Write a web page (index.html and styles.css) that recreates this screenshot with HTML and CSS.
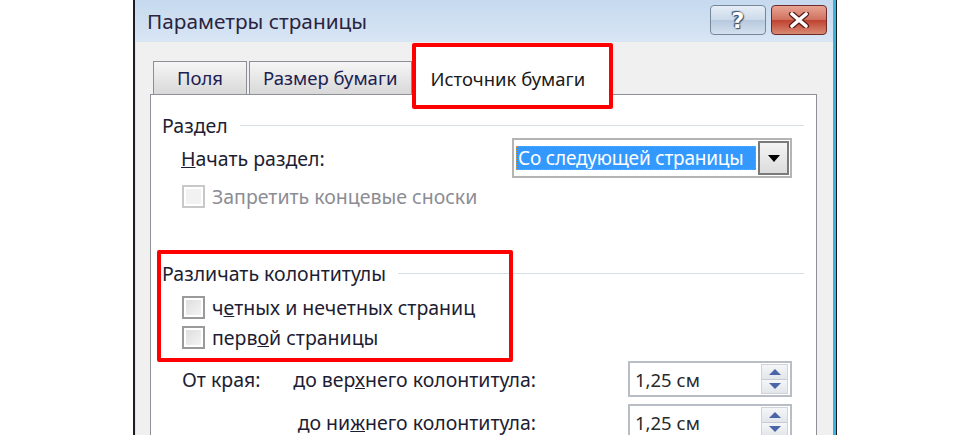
FILE: index.html
```html
<!DOCTYPE html>
<html lang="ru">
<head>
  <meta charset="UTF-8">
  <title>Параметры страницы</title>
  <link rel="stylesheet" href="styles.css">
</head>
<body>
  <div class="window">
    <div class="titlebar">
      <span class="title">Параметры страницы</span>
      <div class="caption-btns">
        <button class="cap-btn help">?</button>
        <button class="cap-btn close">
          <svg width="22" height="16" viewBox="0 0 22 16">
            <path d="M4 2 L18 14 M18 2 L4 14" stroke="#5a1a1a" stroke-width="6" stroke-linecap="round"/>
            <path d="M4 2 L18 14 M18 2 L4 14" stroke="#fff" stroke-width="3.6" stroke-linecap="round"/>
          </svg>
        </button>
      </div>
    </div>

    <div class="client">
      <div class="tabs">
        <div class="tab">Поля</div>
        <div class="tab">Размер бумаги</div>
        <div class="tab active">Источник бумаги</div>
      </div>

      <div class="panel">
        <div class="group-head"><span>Раздел</span><i></i></div>

        <div class="row start-row">
          <span class="label"><u>Н</u>ачать раздел:</span>
          <div class="combo">
            <div class="combo-value"><span>Со следующей страницы</span></div>
            <div class="combo-btn"><b></b></div>
          </div>
        </div>

        <label class="check disabled"><span class="box"></span>Запретить концевые сноски</label>

        <div class="group-head second"><span>Различать колонтитулы</span><i></i></div>
        <label class="check first"><span class="box"></span>ч<u>е</u>тных и нечетных страниц</label>
        <label class="check"><span class="box"></span>перв<u>о</u>й страницы</label>

        <div class="margins">
          <span class="label">От края:</span>
          <span class="label right">до вер<u>х</u>него колонтитула:</span>
          <div class="spin">
            <span>1,25 см</span>
            <div class="spin-btns"><b class="up"></b><b class="down"></b></div>
          </div>
          <span></span>
          <span class="label right">до ни<u>ж</u>него колонтитула:</span>
          <div class="spin">
            <span>1,25 см</span>
            <div class="spin-btns"><b class="up"></b><b class="down"></b></div>
          </div>
        </div>
      </div>
    </div>

    <!-- пометки поверх диалога -->
    <div class="mark mark-tab"></div>
    <div class="mark mark-group"></div>
  </div>
</body>
</html>
```

FILE: styles.css
```css
* {
  margin: 0;
  padding: 0;
  box-sizing: border-box;
}

body {
  background: #fff;
  height: 100vh;
  overflow: hidden;
  font-family: "Noto Sans", "Open Sans", sans-serif;
  color: #1d1d33;
}

.window {
  position: relative;
  margin-left: 133px;
  width: 704px;
  height: 100vh;
  overflow: hidden;
  border-left: 2px solid #1b1e24;
  border-right: 1px solid #1b1e24;
  background: linear-gradient(#c6d9ee, #d7e5f4 40px);
  box-shadow: inset -3px 0 0 #38b5dc;
  display: flex;
  flex-direction: column;
}

.titlebar {
  height: 42px;
  flex: none;
  display: flex;
  align-items: flex-start;
  justify-content: space-between;
  padding: 5px 9px 0 12px;
}

.title {
  font-size: 20.8px;
  line-height: 32px;
  color: #2a2440;
}

.caption-btns {
  display: flex;
  gap: 5px;
}

.cap-btn {
  width: 56px;
  height: 30px;
  border-radius: 4px;
  display: flex;
  align-items: center;
  justify-content: center;
}

.help {
  border: 1px solid #76879c;
  background: linear-gradient(#e6eef7, #cbd9e9 50%, #b7c9de 51%, #d3e0ee);
  font: bold 22px "DejaVu Sans", sans-serif;
  color: #fff;
  text-shadow: 0 0 2px #3b4a60, 1px 1px 1px #3b4a60, -1px -1px 1px #3b4a60;
}

.close {
  border: 1px solid #6e2a2a;
  background: linear-gradient(#e8a493, #d0735f 48%, #bf4331 52%, #d88a72);
}

.client {
  flex: 1;
  margin: 0 3px 0 1px;
  background: #f0f0f0;
  padding: 0 16px 0 14px;
}

.tabs {
  display: flex;
  align-items: flex-end;
  height: 52px;
  padding-left: 3px;
}

.tab {
  height: 33px;
  padding: 0 13px;
  margin-right: 2px;
  border: 1px solid #8b8e96;
  border-bottom: none;
  background: linear-gradient(#f6f6f6, #e7e7e7 50%, #d8d8d8);
  font-size: 18.5px;
  line-height: 32px;
  color: #1c2052;
}

.tab:first-child {
  width: 94px;
  text-align: center;
  padding: 0;
}

.tab.active {
  height: 50px;
  width: 196px;
  padding: 17px 0 0 16px;
  margin-bottom: -1px;
  background: #fff;
  color: #1a1a1a;
}

.panel {
  background: #fff;
  border: 1px solid #8d9097;
  height: 400px;
  padding: 17px 24px 0 11px;
  font-size: 19.5px;
}

.group-head {
  display: flex;
  align-items: center;
  height: 26px;
}

.group-head i {
  flex: 1;
  height: 1px;
  background: #d5dfe5;
  margin-left: 12px;
  margin-right: -12px;
}

.group-head.second {
  margin-top: 52px;
}

.row {
  display: flex;
  align-items: center;
}

.start-row {
  margin-top: 0;
  padding-left: 19px;
  height: 40px;
}

.combo {
  margin-left: auto;
  width: 280px;
  height: 40px;
  border: 2px solid #b4b4b4;
  display: flex;
  padding: 1px 1px 1px 2px;
  background: #fff;
}

.combo-value {
  flex: 1;
  margin: 5px 2px 5px 0;
  background: #3399ff;
  border: 1px dotted #e09030;
  color: #fff;
  overflow: hidden;
  white-space: nowrap;
  line-height: 22px;
  padding-left: 1px;
  font-size: 19px;
  letter-spacing: -0.2px;
}

.combo-btn {
  width: 31px;
  flex: none;
  border: 2px solid #7a7a7a;
  background: linear-gradient(#f4f4f4, #dcdcdc);
  display: flex;
  align-items: center;
  justify-content: center;
}

.combo-btn b {
  border-left: 6px solid transparent;
  border-right: 6px solid transparent;
  border-top: 7px solid #000;
}

.check {
  display: flex;
  align-items: center;
  height: 24px;
  padding-left: 20px;
  margin-top: 6px;
}

.check.first {
  margin-top: 9px;
}

.box {
  width: 23px;
  height: 23px;
  border: 2px solid #9a9a9a;
  background: linear-gradient(135deg, #dcdcdc, #f6f6f6);
  margin-right: 7px;
  box-shadow: inset 0 0 0 2px #fff;
}

.check.disabled {
  color: #8c8c94;
}

.check.disabled .box {
  border-color: #c8c8c8;
  background: #f2f2f2;
}

.margins {
  display: grid;
  grid-template-columns: 104px 250px 1fr;
  row-gap: 7px;
  align-items: center;
  padding-left: 20px;
  margin-top: 12px;
}

.right {
  text-align: right;
}

.spin {
  justify-self: end;
  width: 164px;
  height: 36px;
  border: 2px solid #b9bec6;
  display: flex;
  align-items: center;
  padding-left: 5px;
  background: #fff;
  color: #2a2a2a;
  font-size: 18.5px;
}

.spin span {
  flex: 1;
}

.spin-btns {
  width: 27px;
  height: 30px;
  margin-right: 2px;
  display: flex;
  flex-direction: column;
  border: 1px solid #d0d4da;
}

.spin-btns b {
  flex: 1;
  display: flex;
  align-items: center;
  justify-content: center;
  background: linear-gradient(#f5f6f8, #e2e5ea);
}

.spin-btns b + b {
  border-top: 1px solid #c8ccd2;
}

.spin-btns .up::before,
.spin-btns .down::before {
  content: "";
  border-left: 6px solid transparent;
  border-right: 6px solid transparent;
}

.spin-btns .up::before {
  border-bottom: 6px solid #4a65a8;
}

.spin-btns .down::before {
  border-top: 6px solid #4a65a8;
}

.mark {
  position: absolute;
  border: 4px solid #f00;
  border-radius: 2px;
}

.mark-tab {
  left: 277px;
  top: 43px;
  width: 201px;
  height: 66px;
}

.mark-group {
  left: 22px;
  top: 250px;
  width: 356px;
  height: 112px;
}
```
